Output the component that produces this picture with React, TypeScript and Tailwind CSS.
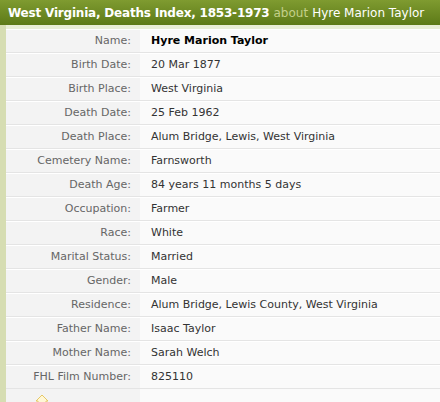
const rows: [string, string][] = [
  ['Name:', 'Hyre Marion Taylor'],
  ['Birth Date:', '20 Mar 1877'],
  ['Birth Place:', 'West Virginia'],
  ['Death Date:', '25 Feb 1962'],
  ['Death Place:', 'Alum Bridge, Lewis, West Virginia'],
  ['Cemetery Name:', 'Farnsworth'],
  ['Death Age:', '84 years 11 months 5 days'],
  ['Occupation:', 'Farmer'],
  ['Race:', 'White'],
  ['Marital Status:', 'Married'],
  ['Gender:', 'Male'],
  ['Residence:', 'Alum Bridge, Lewis County, West Virginia'],
  ['Father Name:', 'Isaac Taylor'],
  ['Mother Name:', 'Sarah Welch'],
  ['FHL Film Number:', '825110'],
]

export default function App() {
  return (
    <div className="h-[402px] w-[440px] overflow-hidden bg-white font-['DejaVu_Sans',Verdana,sans-serif] text-[11px]">
      <div className="flex h-[25px] items-center whitespace-nowrap bg-gradient-to-b from-[#7f9b30] to-[#5d7a17] pl-2 text-[12px] text-white">
        <span className="font-bold tracking-[-0.2px]">West Virginia, Deaths Index, 1853-1973</span>
        <span className="ml-1 text-[#c4d08a]">about</span>
        <span className="ml-1">Hyre Marion Taylor</span>
      </div>
      <div className="flex">
        <div className="w-1.5 shrink-0 bg-[#d6ddb2]" />
        <div className="flex-1">
          <div className="h-1 bg-[#e9eed6]" />
          {rows.map(([label, value], i) => (
            <div key={label} className="flex h-6 border-b border-[#e4e4e4] pt-px">
              <div className="flex w-[134px] items-center justify-end bg-[#f3f3f3] pr-[9px] text-[#666]">{label}</div>
              <div className={`flex flex-1 items-center bg-[#fafafa] pl-[11px] ${i === 0 ? 'font-bold text-black' : 'text-[#333]'}`}>
                {value}
              </div>
            </div>
          ))}
          <div className="flex h-6">
            <div className="w-[134px] bg-[#f3f3f3] pl-[29px] pt-[5px]">
              <svg width="14" height="12" viewBox="0 0 14 12">
                <path d="M1 7 L7 1 L13 7 L11 7 L11 12 L3 12 L3 7 Z" fill="#fff7d6" stroke="#e6c866" strokeWidth="1" />
              </svg>
            </div>
            <div className="flex-1 bg-[#fafafa]" />
          </div>
        </div>
      </div>
    </div>
  )
}
